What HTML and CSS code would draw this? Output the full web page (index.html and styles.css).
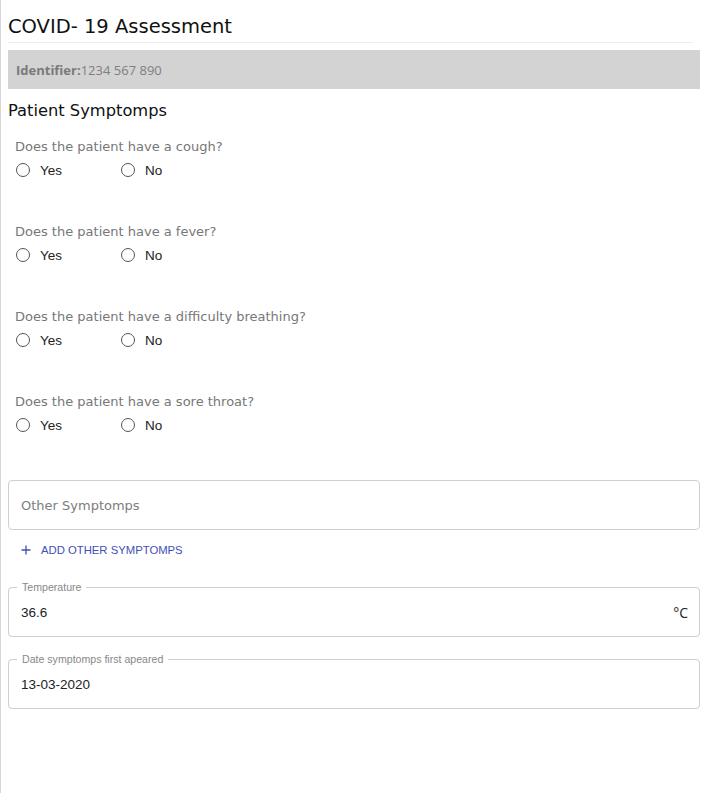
FILE: index.html
```html
<!DOCTYPE html>
<html>
<head>
<meta charset="utf-8">
<link rel="stylesheet" href="styles.css">
</head>
<body>
<div class="page">
  <h1 class="title">COVID- 19 Assessment</h1>
  <div class="ident"><span class="ident-label">Identifier:</span>1234 567 890</div>
  <h2 class="section">Patient Symptomps</h2>

  <div class="questions">
    <div class="question">
      <div class="q-text">Does the patient have a cough?</div>
      <div class="options">
        <label class="opt"><span class="radio"></span>Yes</label>
        <label class="opt"><span class="radio"></span>No</label>
      </div>
    </div>
    <div class="question">
      <div class="q-text">Does the patient have a fever?</div>
      <div class="options">
        <label class="opt"><span class="radio"></span>Yes</label>
        <label class="opt"><span class="radio"></span>No</label>
      </div>
    </div>
    <div class="question">
      <div class="q-text">Does the patient have a difficulty breathing?</div>
      <div class="options">
        <label class="opt"><span class="radio"></span>Yes</label>
        <label class="opt"><span class="radio"></span>No</label>
      </div>
    </div>
    <div class="question">
      <div class="q-text">Does the patient have a sore throat?</div>
      <div class="options">
        <label class="opt"><span class="radio"></span>Yes</label>
        <label class="opt"><span class="radio"></span>No</label>
      </div>
    </div>
  </div>

  <div class="input-box"><span class="placeholder">Other Symptomps</span></div>
  <div class="add-btn">
    <svg class="plus" width="10" height="10" viewBox="0 0 10 10"><path d="M5 0.5v9M0.5 5h9" stroke="#3f51b5" stroke-width="1.3" fill="none"/></svg>
    <span>ADD OTHER SYMPTOMPS</span>
  </div>

  <fieldset class="field">
    <legend class="legend">Temperature</legend>
    <div class="field-row"><span class="value">36.6</span><span class="unit">°C</span></div>
  </fieldset>
  <fieldset class="field">
    <legend class="legend">Date symptomps first apeared</legend>
    <div class="field-row"><span class="value">13-03-2020</span></div>
  </fieldset>
</div>
</body>
</html>
```
FILE: styles.css
```css
html, body {
  margin: 0;
  padding: 0;
  background: #fff;
}
body {
  font-family: "DejaVu Sans", sans-serif;
  border-left: 1px solid #d6d6d6;
  min-height: 793px;
  box-sizing: border-box;
}
.page {
  padding: 0 3px 0 7px;
  display: flex;
  flex-direction: column;
}
.title {
  margin: 0;
  font-weight: normal;
  font-size: 19.5px;
  line-height: 24px;
  padding-top: 15px;
  color: #111;
  padding-bottom: 3px;
  border-bottom: 1px solid #ececec;
  margin-right: 7px;
}
.ident {
  margin-top: 7px;
  background: #d3d3d3;
  height: 39px;
  display: flex;
  align-items: center;
  padding-left: 8px;
  font-family: "Open Sans", sans-serif;
  font-size: 13px;
  color: #808080;
}
.ident-label {
  font-weight: bold;
  color: #7a7a7a;
}
.section {
  margin: 0;
  font-weight: normal;
  font-size: 16.3px;
  line-height: 20px;
  padding-top: 12px;
  color: #111;
}
.questions {
  display: flex;
  flex-direction: column;
  padding-top: 5px;
}
.question {
  padding-left: 7px;
  height: 85px;
}
.q-text {
  font-size: 13px;
  color: #777;
  line-height: 16px;
  padding-top: 13px;
}
.options {
  display: flex;
  margin-top: 7px;
  height: 16px;
  align-items: center;
}
.opt {
  display: flex;
  align-items: center;
  width: 105px;
  font-family: "Liberation Sans", sans-serif;
  font-size: 13.5px;
  color: #222;
}
.radio {
  width: 12px;
  height: 12px;
  border: 1.3px solid #555;
  border-radius: 50%;
  margin-left: 1px;
  margin-right: 10px;
}
.input-box {
  margin-top: 14px;
  height: 48px;
  border: 1px solid #cfcfcf;
  border-radius: 4px;
  display: flex;
  align-items: center;
  padding-left: 12px;
}
.placeholder {
  font-size: 13px;
  color: #7d7d7d;
}
.add-btn {
  display: flex;
  align-items: center;
  height: 20px;
  margin-top: 10px;
  padding-left: 13px;
  font-family: "Liberation Sans", sans-serif;
  font-size: 11.3px;
  color: #3f51b5;
}
.plus {
  margin-right: 10px;
}
.field {
  margin: 0;
  padding: 0 12px;
  border: 1px solid #cfcfcf;
  border-radius: 4px;
  height: 56px;
  box-sizing: border-box;
  min-width: 0;
}
.add-btn + .field {
  margin-top: 21px;
}
.field + .field {
  margin-top: 16px;
}
.legend {
  font-family: "Liberation Sans", sans-serif;
  font-size: 10.6px;
  color: #888;
  padding: 0 5px;
  margin-left: -4px;
  line-height: 12px;
}
.field-row {
  display: flex;
  justify-content: space-between;
  align-items: center;
  height: 38px;
  margin-top: 0px;
  font-family: "Liberation Sans", sans-serif;
  font-size: 13.5px;
  color: #222;
}
.unit {
  font-family: "Open Sans", sans-serif;
  font-size: 14px;
  margin-right: -1px;
}
```
